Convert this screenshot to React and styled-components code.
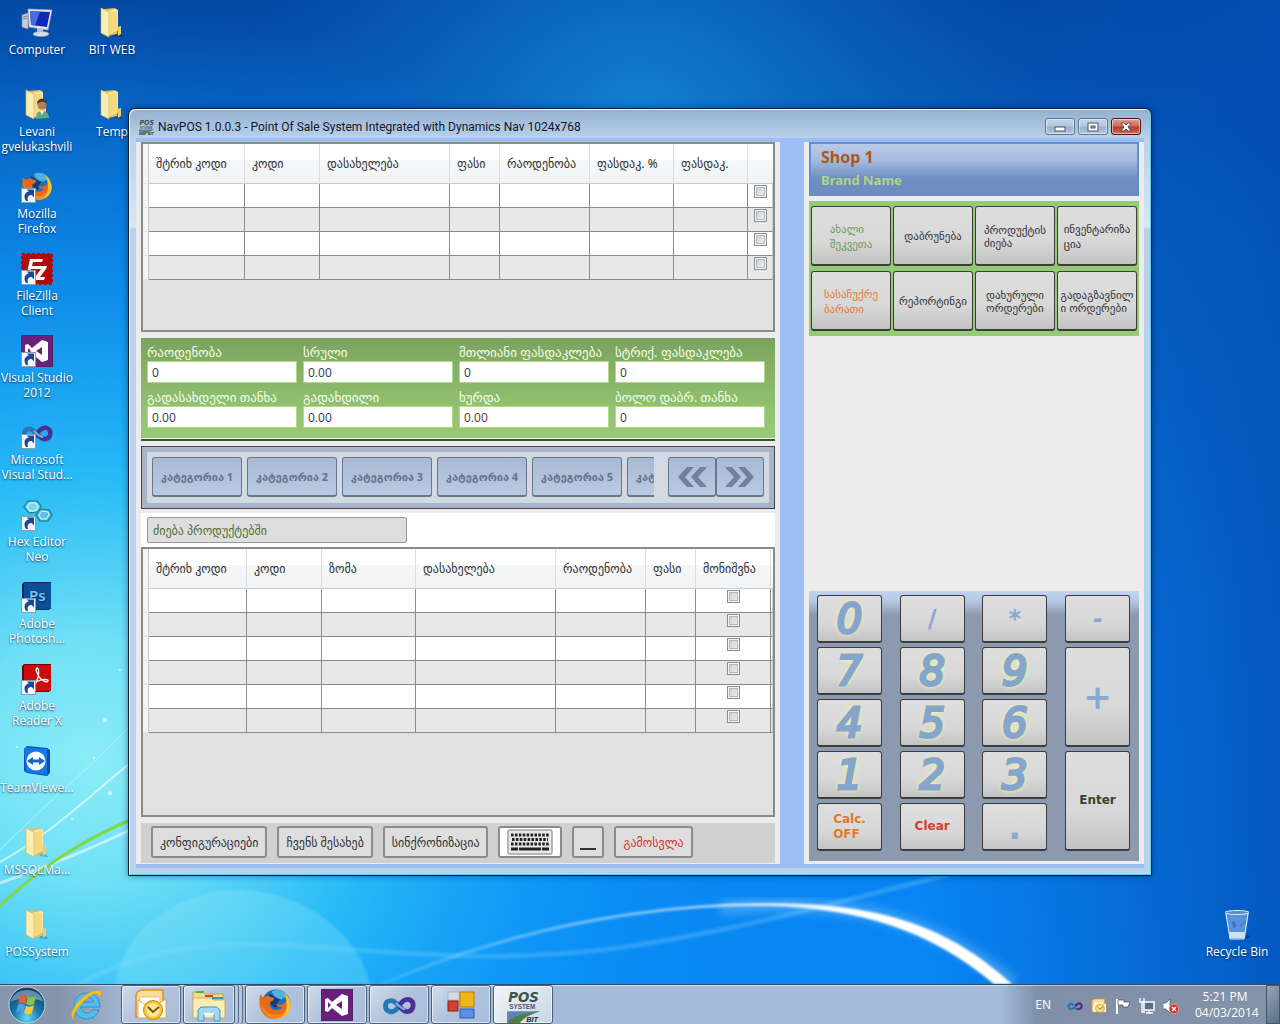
import React from 'react';
import styled, { createGlobalStyle, css } from 'styled-components';

const GlobalStyle = createGlobalStyle`
  * {
    box-sizing: border-box;
  }

  body {
    margin: 0;
    overflow: hidden;
    font-family: 'Noto Sans', 'DejaVu Sans', sans-serif;
    font-size: 12px;
    color: #333;
  }

  button,
  input {
    font-family: inherit;
    margin: 0;
  }
`;

/* ---------- icons ---------- */

const Shortcut = () => (
  <g>
    <rect x="0.5" y="17.5" width="14" height="14" fill="#f4f7fb" stroke="#8e9aa8" />
    <path d="M5 30c-3-5-1-9 3-9.500L5.500 18.500H13v8l-2.200-2.500C7 24 6 26 7 30z" fill="#1c4796" />
  </g>
);

const FolderIcon = ({ user }) => (
  <svg width="32" height="32" viewBox="0 0 32 32" aria-hidden="true">
    <path d="M18 29l9 1-4-6z" fill="#000" opacity="0.25" />
    <path d="M8 2l11-1 2 2v24l-9 2z" fill="#e3bf5c" />
    <path d="M11 4l9-2 2 1v20l-9 5z" fill="#f8e7a0" />
    <path d="M14 5l7-1v18l-7 5z" fill="#f4d97f" />
    <path d="M5 1l8 4v25l-8-4z" fill="#fbeeb5" stroke="#d6b251" strokeWidth="0.7" />
    <path d="M21 20l4-1v8l-3 2z" fill="#efcf6d" />
    {user && (
      <g>
        <path d="M15 30c0-6 2-8 6-8s7 2 7 7z" fill="#5fa58a" />
        <circle cx="21" cy="16" r="4.500" fill="#b97f5a" />
        <path d="M16 15c0-7 10-7 10 0-3-3-6-3-10 0z" fill="#4d3a2e" />
        <path d="M19 22l2 4 2-4z" fill="#e8f2f0" />
      </g>
    )}
  </svg>
);

const ComputerIcon = () => (
  <svg width="32" height="32" viewBox="0 0 32 32" aria-hidden="true">
    <path d="M1 8l6-2v16l-6-2z" fill="#c9ced3" stroke="#858e98" strokeWidth="0.6" />
    <path d="M2 10l4-1M2 12l4-1" stroke="#7b858f" />
    <path d="M7 2l24 1-4 20-19-3z" fill="#e5e9ed" stroke="#9ba5af" strokeWidth="0.7" />
    <path d="M9 4l20 1-3 15-16-2z" fill="#1327b6" />
    <path d="M9 4l10 .5-5 14.200-4-.7z" fill="#4a6ce0" />
    <path d="M16 21l6 1v4h-6z" fill="#bcc4cb" />
    <ellipse cx="20" cy="27" rx="8" ry="2.500" fill="#d9dee2" stroke="#98a2ab" strokeWidth="0.6" />
  </svg>
);

const FirefoxMark = () => (
  <g>
    <circle cx="17" cy="15" r="13.500" fill="#1e6fb8" />
    <path d="M13 3c6-3 14 0 16 7-3-2-5-1-7 1-3-2-7-1-9-8z" fill="#4fb3e0" />
    <path d="M10 5c4 2 7 5 11 6-3 2-4 4-3 7-4 2-8-3-8-13z" fill="#123b80" />
    <path d="M2 6l3 3c2-2 6-2 8 0 2 0 3 1 1 3-3 1-4 3-2 6 3 4 8 3 11 0-3 0-5-1-6-3 5 2 9 0 10-5 4 9-1 18-11 19C6 30-1 20 2 6z" fill="#e66a1a" />
    <path d="M24 4c7 5 9 14 4 20-3 4-8 5-11 5 6-2 10-6 10-13 0-5-1-9-3-12z" fill="#fbc02a" />
    <path d="M3 11c0 8 6 15 15 14 4 0 7-3 9-7-1 8-7 12-12 11C7 28 2 20 3 11z" fill="#f18a1e" />
  </g>
);

const FirefoxIcon = ({ size = 32, shortcut }) => (
  <svg width={size} height={size} viewBox="0 0 32 32" aria-hidden="true">
    <FirefoxMark />
    {shortcut && <Shortcut />}
  </svg>
);

const FileZillaIcon = () => (
  <svg width="32" height="32" viewBox="0 0 32 32" aria-hidden="true">
    <rect x="1" y="1" width="30" height="30" fill="#b30a0a" stroke="#b30a0a" strokeWidth="2" strokeDasharray="3 2" />
    <path d="M9 6h13l-1 3H12l-1 4h8l-1 3h-8l-2 8H5z" fill="#fff" />
    <path d="M15 13h11l-1 3-6 8h5l-1 3H13l1-3 6-8h-6z" fill="#fff" />
    <Shortcut />
  </svg>
);

const VsIcon = ({ shortcut }) => (
  <svg width="32" height="32" viewBox="0 0 32 32" aria-hidden="true">
    <rect width="32" height="32" fill="#68217a" />
    <rect x="0.5" y="0.5" width="31" height="31" fill="none" stroke="#56206b" />
    <path fillRule="evenodd" d="M21 5l6 2v18l-6 2-10-8-4 4-3-1V10l3-1 4 4zM21 12l-6 4 6 4zM7 13v6l3-3z" fill="#fff" />
    {shortcut && <Shortcut />}
  </svg>
);

const InfinityMark = () => (
  <g fill="none" strokeWidth="4.500">
    <path d="M16 17c-3 5-6 6-9 5-5-1-5-9 0-10 4-1 6 2 9 5" stroke="#2876b8" />
    <path d="M16 17c3-5 6-7 10-6 5 2 4 10-1 11-4 1-6-2-9-5" stroke="#4b2f92" />
    <path d="M13 14c3 3 6 6 9 6" stroke="#7fa9dd" strokeWidth="2" />
  </g>
);

const InfinityIcon = ({ size = 32, shortcut }) => (
  <svg width={size} height={size} viewBox="0 0 32 32" aria-hidden="true">
    <InfinityMark />
    {shortcut && <Shortcut />}
  </svg>
);

const HexIcon = () => (
  <svg width="32" height="32" viewBox="0 0 32 32" aria-hidden="true">
    <g strokeWidth="1.500" stroke="#2189a8">
      <path d="M3 8l4-6 9 0 4 5-3 6-9 1z" fill="#7fd6ec" />
      <path d="M15 16l4-6 9 1 3 5-4 6-8 0z" fill="#59c3df" />
    </g>
    <path d="M6 8l3-4 6 0 2 4-3 4-5 0zM18 16l3-4 6 1 1 3-3 4-5 0z" fill="none" stroke="#d8f6fc" />
    <Shortcut />
  </svg>
);

const PhotoshopIcon = () => (
  <svg width="32" height="32" viewBox="0 0 32 32" aria-hidden="true">
    <path d="M1 3l2-2h27v26l-2 2H1z" fill="#0a2c5c" />
    <path d="M3 2h27v26H3z" fill="#0c4f97" />
    <text x="8" y="20" fontFamily="Noto Sans" fontSize="15" fontWeight="600" fill="#74c6f5">Ps</text>
    <Shortcut />
  </svg>
);

const ReaderIcon = () => (
  <svg width="32" height="32" viewBox="0 0 32 32" aria-hidden="true">
    <path d="M1 3l2-2h27v26l-2 2H1z" fill="#6d0606" />
    <path d="M3 2h27v26H3z" fill="#c90d0d" />
    <path d="M16 5c-2 1 0 6 3 10 3 3 7 5 8 3s-6-2-10 0c-3 1-6 4-5 5s4-4 5-9c1-4 1-9-1-9z" fill="none" stroke="#fff" strokeWidth="1.300" />
    <Shortcut />
  </svg>
);

const TeamViewerIcon = () => (
  <svg width="32" height="32" viewBox="0 0 32 32" aria-hidden="true">
    <path d="M3 4l3-3 20 2 3 2v23l-3 3-20-3-3-2z" fill="#0a49b8" />
    <path d="M3 4l2-2 21 2v26L5 27z" fill="#1676e6" />
    <circle cx="15" cy="16" r="9.500" fill="#f5f9fd" />
    <path d="M6 16l6-4v2.500h6V12l6 4-6 4v-2.500h-6V20z" fill="#1565cc" />
  </svg>
);

const RecycleIcon = () => (
  <svg width="32" height="32" viewBox="0 0 32 32" aria-hidden="true">
    <path d="M4 3h24l-4 27H9z" fill="#cfe4f7" opacity="0.4" />
    <path d="M8 23h16l-1 6H9z" fill="#e8ecef" opacity="0.85" />
    <ellipse cx="16" cy="3.500" rx="12" ry="2" fill="#5d88b8" stroke="#e4eef7" />
    <path d="M5 5l4 25h14l4-25" fill="none" stroke="#dfeaf5" />
    <path d="M11 14l2-2 2 5-2 2zM19 17l6-5" fill="#3a66c8" stroke="#4060b8" opacity="0.7" />
    <path d="M24 30l6-2-4-3z" fill="#000" opacity="0.25" />
  </svg>
);

const StartOrb = () => (
  <svg width="38" height="38" viewBox="0 0 38 38" aria-hidden="true">
    <defs>
      <radialGradient id="orb" cx="0.5" cy="0.85" r="0.8">
        <stop offset="0" stopColor="#5fdcf8" />
        <stop offset="0.45" stopColor="#1b7ab0" />
        <stop offset="1" stopColor="#123e66" />
      </radialGradient>
    </defs>
    <circle cx="19" cy="19" r="18" fill="url(#orb)" stroke="#c3d3e2" />
    <path d="M3 16C5 0 33 0 35 16c-8-5-24-5-32 0z" fill="#dcebf5" opacity="0.4" />
    <path d="M12 10c3-2 5-1 7 0l-2 8c-2-1-4-2-7 0z" fill="#e8602c" />
    <path d="M20 11c3 1 5 1 8-1l-2 8c-3 2-5 1-8 0z" fill="#8cc63f" />
    <path d="M10 19c3-2 5-1 7 0l-2 8c-2-1-4-2-7 0z" fill="#4aa3e6" />
    <path d="M18 20c3 1 5 1 8-1l-2 8c-3 2-5 1-8 0z" fill="#fcc92e" />
  </svg>
);

const IeIcon = () => (
  <svg width="34" height="34" viewBox="0 0 34 34" aria-hidden="true">
    <path
      fillRule="evenodd"
      d="M31 19H12c0 4 3 6 6 6 2 0 4-1 5-3h7c-2 6-7 9-12 9C10 31 5 25 5 18S10 5 18 5s13 6 13 14zM12 14h12c0-3-3-5-6-5s-6 2-6 5z"
      fill="#4fbdf0"
      stroke="#1f86c4"
      strokeWidth="0.8"
    />
    <path d="M6 32c-7-1-3-13 6-21 8-8 19-11 20-6 0 2-1 4-2 6 1-4-1-6-5-5C19 8 8 19 5 27c-1 2-1 4 1 5z" fill="#f6c322" stroke="#c79a1a" strokeWidth="0.5" />
  </svg>
);

const OutlookIcon = ({ size = 34 }) => (
  <svg width={size} height={size} viewBox="0 0 34 34" aria-hidden="true">
    <path d="M2 9c0-5 3-7 7-7h20v24l-4 3H2z" fill="#fbdc9a" stroke="#e08f25" strokeWidth="1.500" />
    <path d="M6 9h20v10H6z" fill="#fff" stroke="#e8b660" strokeWidth="0.8" />
    <path d="M4 12l13 8 15-9v19H4z" fill="#fffdf7" stroke="#d89b3a" strokeWidth="0.8" />
    <circle cx="19" cy="22" r="9.500" fill="#fbc531" stroke="#c78412" />
    <circle cx="19" cy="22" r="6.800" fill="#fde79a" />
    <path d="M14 19l5 5 6-5" fill="none" stroke="#7d5312" strokeWidth="2" />
  </svg>
);

const ExplorerIcon = () => (
  <svg width="34" height="34" viewBox="0 0 34 34" aria-hidden="true">
    <path d="M1 4h10l2 2h18v6H1z" fill="#f5dc8c" stroke="#b69136" strokeWidth="0.7" />
    <path d="M4 3h8v2H4z" fill="#3eb53b" />
    <path d="M13 7h8v2h-8z" fill="#d64232" />
    <path d="M20 9h11v2H20z" fill="#3b8fd2" />
    <path d="M1 10h18l2 2h12v18H1z" fill="#fbedb4" stroke="#c29c40" strokeWidth="0.7" />
    <path d="M6 33V22l3-3h16l3 3v11h-6v-7h-10v7z" fill="#9fd8f0" stroke="#3b9cc6" />
    <path d="M12 26h10" stroke="#fff" strokeWidth="2" />
  </svg>
);

const BlocksIcon = () => (
  <svg width="32" height="32" viewBox="0 0 32 32" aria-hidden="true">
    <rect x="3" y="3" width="11" height="8" fill="#d5dbe3" stroke="#aab4c2" />
    <rect x="15" y="3" width="14" height="15" fill="#f2b518" stroke="#b37c0a" />
    <rect x="3" y="12" width="10" height="10" fill="#d7402d" stroke="#8f1e12" />
    <rect x="15" y="20" width="14" height="9" fill="#5d8fe6" stroke="#2f5cb0" />
  </svg>
);

const PosLogo = ({ size = 34 }) => (
  <svg width={size} height={size} viewBox="0 0 34 34" aria-hidden="true">
    <text x="3" y="14" fontFamily="DejaVu Sans Condensed, DejaVu Sans" fontSize="14" fontWeight="700" fontStyle="italic" fill="#3d5347">POS</text>
    <text x="4" y="21" fontFamily="Liberation Sans" fontSize="6" fontWeight="700" fill="#4a5568">SYSTEM</text>
    <path d="M2 23h31L2 34z" fill="#5d83b8" />
    <path d="M2 34c5-6 14-9 31-11-12 4-16 7-19 11z" fill="#4c8040" />
    <text x="20" y="33" fontFamily="Liberation Sans" fontSize="7" fontWeight="700" fontStyle="italic" fill="#222c38">BIT</text>
  </svg>
);

const KeyboardIcon = () => (
  <svg width="46" height="26" viewBox="0 0 46 26" aria-hidden="true">
    <rect x="1" y="1" width="44" height="24" rx="2" fill="#e9e9e9" stroke="#a3a3a3" strokeWidth="1.500" />
    <g stroke="#222" strokeWidth="3">
      <path d="M4 6h38" strokeDasharray="2.600 1.300" />
      <path d="M5 10.500h36" strokeDasharray="2.600 1.300" />
      <path d="M4 15h38" strokeDasharray="2.600 1.300" />
      <path d="M4 20h7M12 20h22M35 20h7" />
    </g>
  </svg>
);

const Chevrons = ({ right }) => (
  <svg width="32" height="24" viewBox="0 0 32 24" aria-hidden="true">
    <path
      d={right
        ? 'M1 2h7l9 10-9 10H1l9-10zM14 2h7l9 10-9 10h-7l9-10z'
        : 'M31 2h-7l-9 10 9 10h7l-9-10zM18 2h-7L2 12l9 10h7L9 12z'}
      fill="#71819c"
    />
  </svg>
);

const FlagIcon = () => (
  <svg width="16" height="16" viewBox="0 0 16 16" aria-hidden="true">
    <path d="M2 1v15" stroke="#fff" strokeWidth="2" />
    <path d="M3 2h6v2h6l-2 5H8V7H3z" fill="#fff" stroke="#333" strokeWidth="0.6" />
  </svg>
);

const NetworkIcon = () => (
  <svg width="16" height="16" viewBox="0 0 16 16" aria-hidden="true">
    <path d="M5 4h10v8H5z" fill="#5b6f88" stroke="#fff" strokeWidth="1.500" />
    <path d="M7 15h7M10 12v3" stroke="#fff" strokeWidth="1.500" />
    <path d="M1 0v4h4V0M3 4v10h3" fill="none" stroke="#fff" strokeWidth="1.300" />
  </svg>
);

const SpeakerIcon = () => (
  <svg width="16" height="16" viewBox="0 0 16 16" aria-hidden="true">
    <path d="M0 5h3l4-4v14l-4-4H0z" fill="#fff" stroke="#444" strokeWidth="0.6" />
    <circle cx="11" cy="11" r="4.800" fill="#d92c20" stroke="#f7cfca" strokeWidth="0.6" />
    <path d="M9 9l4 4M13 9l-4 4" stroke="#fff" strokeWidth="1.600" />
  </svg>
);

const Wallpaper = () => (
  <WallpaperSvg viewBox="0 0 1280 1024" preserveAspectRatio="none" aria-hidden="true">
    <defs>
      <linearGradient id="sky" x1="0" y1="0" x2="0" y2="1">
        <stop offset="0" stopColor="#0448a4" />
        <stop offset="0.25" stopColor="#0667c8" />
        <stop offset="0.6" stopColor="#0a80ea" />
        <stop offset="1" stopColor="#0787f6" />
      </linearGradient>
      <radialGradient id="glow" gradientUnits="userSpaceOnUse" cx="90" cy="760" r="760">
        <stop offset="0" stopColor="#8becf7" />
        <stop offset="0.16" stopColor="#70e0f6" />
        <stop offset="0.38" stopColor="#28bdf7" stopOpacity="0.95" />
        <stop offset="0.65" stopColor="#109cf8" stopOpacity="0.6" />
        <stop offset="1" stopColor="#0b84ea" stopOpacity="0" />
      </radialGradient>
      <radialGradient id="top" gradientUnits="userSpaceOnUse" cx="640" cy="120" r="400">
        <stop offset="0" stopColor="#1590dd" stopOpacity="0.75" />
        <stop offset="1" stopColor="#0a6cc8" stopOpacity="0" />
      </radialGradient>
      <linearGradient id="edge" x1="0" y1="0" x2="1" y2="0">
        <stop offset="0.72" stopColor="#0350b8" stopOpacity="0" />
        <stop offset="1" stopColor="#034db4" stopOpacity="0.8" />
      </linearGradient>
      <linearGradient id="arc" x1="0" y1="0" x2="1" y2="0">
        <stop offset="0" stopColor="#fff" stopOpacity="0.15" />
        <stop offset="0.5" stopColor="#fff" stopOpacity="0.55" />
        <stop offset="0.75" stopColor="#fff" />
      </linearGradient>
      <filter id="soft"><feGaussianBlur stdDeviation="1" /></filter>
      <filter id="haze"><feGaussianBlur stdDeviation="5" /></filter>
    </defs>
    <rect width="1280" height="1024" fill="url(#sky)" />
    <rect width="1280" height="1024" fill="url(#top)" />
    <rect width="1280" height="1024" fill="url(#glow)" />
    <rect width="1280" height="1024" fill="url(#edge)" />
    <path d="M115 984c10-60 70-95 125-94s115 35 130 94z" fill="#9ff0f8" opacity="0.25" filter="url(#soft)" />
    <path d="M80 984c60-35 130-42 200-39 100 5 200 20 330 4 120-16 220-45 340-75" fill="none" stroke="#8fdcff" strokeWidth="5" opacity="0.25" filter="url(#soft)" />
    <path d="M720 908C860 895 940 925 1013 984" fill="none" stroke="#bfe6ff" strokeWidth="14" opacity="0.3" filter="url(#haze)" />
    <path d="M380 984C500 930 640 903 765 903c110 0 180 20 247 81h-18C930 930 860 908 765 906 640 906 510 932 384 984z" fill="url(#arc)" filter="url(#soft)" />
    <path d="M0 862C50 835 90 795 140 755" fill="none" stroke="#fff" strokeWidth="2" opacity="0.6" />
    <path d="M0 883C60 862 100 845 140 825" fill="none" stroke="#fff" strokeWidth="3" opacity="0.55" />
    <path d="M0 850C60 790 100 760 140 715" fill="none" stroke="#fff" opacity="0.4" />
    <path d="M0 906C40 868 80 840 140 816" fill="none" stroke="#7fd84c" strokeWidth="3" />
    <g fill="#fff" opacity="0.7">
      <circle cx="105" cy="720" r="2" />
      <circle cx="94" cy="758" r="1" />
      <circle cx="110" cy="793" r="2" />
      <circle cx="72" cy="819" r="1" />
      <circle cx="17" cy="747" r="1" />
      <circle cx="120" cy="670" r="1" />
    </g>
  </WallpaperSvg>
);

/* ---------- data ---------- */

const desktopItems = [
  { label: 'Computer', icon: <ComputerIcon /> },
  { label: 'Levani gvelukashvili', icon: <FolderIcon user /> },
  { label: 'Mozilla Firefox', icon: <FirefoxIcon shortcut /> },
  { label: 'FileZilla Client', icon: <FileZillaIcon /> },
  { label: 'Visual Studio 2012', icon: <VsIcon shortcut /> },
  { label: 'Microsoft Visual Stud...', icon: <InfinityIcon shortcut /> },
  { label: 'Hex Editor Neo', icon: <HexIcon /> },
  { label: 'Adobe Photosh...', icon: <PhotoshopIcon /> },
  { label: 'Adobe Reader X', icon: <ReaderIcon /> },
  { label: 'TeamViewe...', icon: <TeamViewerIcon /> },
  { label: 'MSSQLMa...', icon: <FolderIcon /> },
  { label: 'POSSystem', icon: <FolderIcon /> },
  { label: 'BIT WEB', icon: <FolderIcon /> },
  { label: 'Temp', icon: <FolderIcon /> },
];

const orderColumns = [
  { title: 'შტრიხ კოდი', width: 96 },
  { title: 'კოდი', width: 75 },
  { title: 'დასახელება' },
  { title: 'ფასი', width: 50 },
  { title: 'რაოდენობა', width: 90 },
  { title: 'ფასდაკ. %', width: 84 },
  { title: 'ფასდაკ.', width: 74 },
  { title: '', width: 25, check: true },
];

const productColumns = [
  { title: 'შტრიხ კოდი', width: 98 },
  { title: 'კოდი', width: 75 },
  { title: 'ზომა', width: 94 },
  { title: 'დასახელება' },
  { title: 'რაოდენობა', width: 90 },
  { title: 'ფასი', width: 50 },
  { title: 'მონიშვნა', width: 75, check: true },
  { title: '', width: 2 },
];

const totals = [
  { label: 'რაოდენობა', value: '0' },
  { label: 'სრული', value: '0.00' },
  { label: 'მთლიანი ფასდაკლება', value: '0' },
  { label: 'სტრიქ. ფასდაკლება', value: '0' },
  { label: 'გადასახდელი თანხა', value: '0.00' },
  { label: 'გადახდილი', value: '0.00' },
  { label: 'ხურდა', value: '0.00', color: '#6b2f2f' },
  { label: 'ბოლო დაბრ. თანხა', value: '0' },
];

const actions = [
  { lines: ['ახალი', 'შეკვეთა'], color: '#6f9a55', tall: true },
  { lines: ['დაბრუნება'] },
  { lines: ['პროდუქტის', 'ძიება'] },
  { lines: ['ინვენტარიზა', 'ცია'], tall: true },
  { lines: ['სასაჩუქრე', 'ბარათი'], color: '#e07a30', tall: true },
  { lines: ['რეპორტინგი'] },
  { lines: ['დახურული', 'ორდერები'] },
  { lines: ['გადაგზავნილ', 'ი ორდერები'] },
];

const keys = [
  { text: '0', kind: 'digit' },
  { text: '/', kind: 'sign' },
  { text: '*', kind: 'sign' },
  { text: '-', kind: 'sign' },
  { text: '7', kind: 'digit' },
  { text: '8', kind: 'digit' },
  { text: '9', kind: 'digit' },
  { text: '+', kind: 'big', rows: 2 },
  { text: '4', kind: 'digit' },
  { text: '5', kind: 'digit' },
  { text: '6', kind: 'digit' },
  { text: '1', kind: 'digit' },
  { text: '2', kind: 'digit' },
  { text: '3', kind: 'digit' },
  { text: 'Enter', color: '#36452c', rows: 2 },
  { text: 'Calc. OFF', color: '#dc7a2c' },
  { text: 'Clear', color: '#d0402f' },
  { text: '.', kind: 'big' },
];

/* ---------- components ---------- */

const Grid = ({ columns, rows, label }) => (
  <Table aria-label={label}>
    <colgroup>
      <col style={{ width: 6 }} />
      {columns.map((c, i) => (
        <col key={i} style={{ width: c.width }} />
      ))}
    </colgroup>
    <thead>
      <tr>
        <RowHead as="th" />
        {columns.map((c, i) => (
          <HeadCell key={i}>{c.title}</HeadCell>
        ))}
      </tr>
    </thead>
    <tbody>
      {Array.from({ length: rows }, (_, r) => (
        <Row key={r}>
          <RowHead />
          {columns.map((c, i) => (
            <Cell key={i}>
              {c.check && <Check type="checkbox" aria-label={`row ${r + 1}`} />}
            </Cell>
          ))}
        </Row>
      ))}
    </tbody>
  </Table>
);

const App = () => (
  <Screen>
    <GlobalStyle />
    <Wallpaper />
    <Desktop>
      <IconGrid>
        {desktopItems.map((item) => (
          <DesktopIcon key={item.label}>
            {item.icon}
            <span>{item.label}</span>
          </DesktopIcon>
        ))}
      </IconGrid>
      <DesktopIcon>
        <RecycleIcon />
        <span>Recycle Bin</span>
      </DesktopIcon>

      <Window>
        <TitleBar>
          <PosLogo size={17} />
          <Title>NavPOS 1.0.0.3 - Point Of Sale System Integrated with Dynamics Nav 1024x768</Title>
          <WindowButton aria-label="Minimize">
            <svg width="12" height="12" viewBox="0 0 12 12"><rect x="1" y="6" width="10" height="4" fill="#fff" stroke="#4b5563" /></svg>
          </WindowButton>
          <WindowButton aria-label="Maximize">
            <svg width="12" height="12" viewBox="0 0 12 12">
              <rect x="1" y="2" width="10" height="8" fill="#fff" stroke="#4b5563" />
              <rect x="4" y="5" width="4" height="2" fill="#9db4cc" stroke="#4b5563" />
            </svg>
          </WindowButton>
          <WindowButton $close aria-label="Close">
            <svg width="12" height="12" viewBox="0 0 12 12">
              <path d="M1 2h3l2 2 2-2h3L8 6l3 4H8L6 8l-2 2H1l3-4z" fill="#fff" stroke="#4b3a44" strokeWidth="0.8" />
            </svg>
          </WindowButton>
        </TitleBar>

        <Body>
          <LeftPane>
            <GridBox>
              <Grid columns={orderColumns} rows={4} label="Order" />
            </GridBox>

            <Totals>
              {totals.map((t, i) => (
                <Field key={i} $color={t.color}>
                  {t.label}
                  <input defaultValue={t.value} />
                </Field>
              ))}
            </Totals>

            <Categories>
              <CategoryInner>
                <CategoryList>
                  {[1, 2, 3, 4, 5, 6].map((n) => (
                    <Category key={n}>კატეგორია {n}</Category>
                  ))}
                </CategoryList>
                <Pager>
                  <PageButton aria-label="Previous"><Chevrons /></PageButton>
                  <PageButton aria-label="Next"><Chevrons right /></PageButton>
                </Pager>
              </CategoryInner>
            </Categories>

            <SearchBar>
              <Search aria-label="Search" defaultValue="ძიება პროდუქტებში" />
            </SearchBar>
            <GridBox $grow>
              <Grid columns={productColumns} rows={6} label="Products" />
            </GridBox>

            <Footer>
              <FooterButton>კონფიგურაციები</FooterButton>
              <FooterButton>ჩვენს შესახებ</FooterButton>
              <FooterButton>სინქრონიზაცია</FooterButton>
              <FooterButton $white aria-label="Keyboard"><KeyboardIcon /></FooterButton>
              <FooterButton $dash aria-label="Minimize"><Dash /></FooterButton>
              <FooterButton $red>გამოსვლა</FooterButton>
            </Footer>
          </LeftPane>

          <RightPane>
            <ShopHeader>
              <ShopName>Shop 1</ShopName>
              <BrandName>Brand Name</BrandName>
            </ShopHeader>
            <Actions>
              {actions.map((a) => (
                <ActionButton key={a.lines[0]} $color={a.color} $tall={a.tall}>
                  <span>
                    {a.lines.map((l) => (
                      <div key={l}>{l}</div>
                    ))}
                  </span>
                </ActionButton>
              ))}
            </Actions>
            <Keypad>
              {keys.map((k) => (
                <Key key={k.text} $kind={k.kind} $rows={k.rows} $color={k.color}>
                  <span>{k.text}</span>
                </Key>
              ))}
            </Keypad>
          </RightPane>
        </Body>
      </Window>
    </Desktop>

    <Taskbar>
      <PlainButton aria-label="Start"><StartOrb /></PlainButton>
      <PlainButton aria-label="Internet Explorer"><IeIcon /></PlainButton>
      <TaskList>
        <Task aria-label="Outlook"><OutlookIcon /></Task>
        <Task $stack aria-label="Explorer"><ExplorerIcon /></Task>
        <Task aria-label="Firefox"><FirefoxIcon size={34} /></Task>
        <Task aria-label="Visual Studio"><VsIcon /></Task>
        <Task aria-label="Visual Studio 2010"><InfinityIcon size={34} /></Task>
        <Task aria-label="Blocks"><BlocksIcon /></Task>
        <Task $active aria-label="NavPOS"><PosLogo size={36} /></Task>
      </TaskList>
      <Tray>
        <span>EN</span>
        <TrayIcons>
          <InfinityIcon size={16} />
          <OutlookIcon size={16} />
          <FlagIcon />
          <NetworkIcon />
          <SpeakerIcon />
        </TrayIcons>
        <Clock>
          <div>5:21 PM</div>
          <div>04/03/2014</div>
        </Clock>
        <ShowDesktop aria-label="Show desktop" />
      </Tray>
    </Taskbar>
  </Screen>
);

/* ---------- styles ---------- */

const Screen = styled.div`
  position: relative;
  display: flex;
  flex-direction: column;
  height: 100vh;
  overflow: hidden;
`;

const WallpaperSvg = styled.svg`
  position: absolute;
  inset: 0;
  width: 100%;
  height: 100%;
`;

const Desktop = styled.main`
  position: relative;
  flex: 1;
  display: flex;
  justify-content: space-between;
  align-items: flex-end;
  padding-right: 6px;
`;

const IconGrid = styled.div`
  align-self: stretch;
  display: grid;
  grid-auto-flow: column;
  grid-template-rows: repeat(12, 82px);
  grid-auto-columns: 75px;
`;

const DesktopIcon = styled.div`
  display: flex;
  flex-direction: column;
  align-items: center;
  width: 74px;
  height: 82px;
  padding-top: 7px;
  color: #fff;
  font-family: 'Open Sans', 'Noto Sans', sans-serif;
  font-size: 12px;
  line-height: 15px;
  text-align: center;
  text-shadow: 0 1px 2px rgba(0, 20, 60, 0.8);

  svg {
    flex-shrink: 0;
  }

  span {
    margin-top: 3px;
  }
`;

const Window = styled.section`
  position: absolute;
  top: 108px;
  left: 10%;
  right: 10%;
  bottom: 108px;
  display: flex;
  flex-direction: column;
  padding: 0 7px 7px;
  border: 1px solid #10202e;
  border-radius: 7px 7px 0 0;
  background: linear-gradient(#93b0cf, #b9d1ea 29px, #d8e6f6 118px, #b9d1ea 120px);
  box-shadow: inset 1px 1px 0 #e9f3fb, inset -1px -1px 0 #5fd0ea, 0 0 6px rgba(0, 20, 60, 0.5);
`;

const TitleBar = styled.header`
  display: flex;
  align-items: center;
  height: 29px;
  padding: 6px 3px 0 2px;
  gap: 3px;
`;

const Title = styled.span`
  flex: 1;
  color: #14142a;
  font-family: Roboto, 'Open Sans', sans-serif;
  font-size: 12px;
  white-space: nowrap;
`;

const WindowButton = styled.button`
  display: flex;
  align-items: center;
  justify-content: center;
  width: 30px;
  height: 17px;
  padding: 0;
  border: 1px solid ${(p) => (p.$close ? '#4a1420' : '#5d7592')};
  border-radius: 3px;
  box-shadow: inset 0 0 0 1px rgba(255, 255, 255, 0.5);
  background: ${(p) => (p.$close
    ? 'linear-gradient(#dba39a, #cd6a58 48%, #b93a26 52%, #cf6a50)'
    : 'linear-gradient(#c3d5e8, #b3c8de 48%, #98b2ce 52%, #b0c8e0)')};
`;

const Body = styled.div`
  flex: 1;
  display: flex;
  gap: 24px;
  padding: 4px 0;
  min-height: 0;
  background: #9dbdf5;
`;

const LeftPane = styled.div`
  flex: 1;
  min-width: 0;
  display: flex;
  flex-direction: column;
  padding: 0 5px 1px;
  background: #ececec;
`;

const GridBox = styled.div`
  border: 2px solid #8a8a8a;
  background: #e1e1e1;
  ${(p) => (p.$grow ? 'flex: 1;' : 'padding-bottom: 50px;')}
`;

const Table = styled.table`
  width: 100%;
  table-layout: fixed;
  border-collapse: separate;
  border-spacing: 0;
`;

const HeadCell = styled.th`
  height: 40px;
  padding: 0 0 0 7px;
  border-right: 1px solid #dcdfe2;
  border-bottom: 1px solid #c9cccf;
  background: linear-gradient(#fff 40%, #f5f7f8 42%, #f0f2f4);
  color: #333;
  font-size: 12px;
  font-weight: 400;
  text-align: left;
  white-space: nowrap;

  &:last-child {
    border-right: 0;
    padding: 0;
  }
`;

const Cell = styled.td`
  height: 24px;
  padding: 1px 0 0;
  border-right: 1px solid #8a8a8a;
  border-bottom: 1px solid #8a8a8a;
  text-align: center;
  vertical-align: top;
  line-height: 0;

  &:last-child {
    border-right-color: #ccc;
  }
`;

const RowHead = styled.td`
  padding: 0;
  border-right: 1px solid #c8c8c8;
  border-bottom: 1px solid #e4e4e4;
  background: #f6f6f6;
`;

const Row = styled.tr`
  background: #fff;

  &:nth-child(even) {
    background: #e8e8e8;
  }
`;

const Check = styled.input`
  appearance: none;
  width: 13px;
  height: 13px;
  border: 1px solid #8c8f92;
  background: linear-gradient(135deg, #c5cad0, #f4f5f6);
  box-shadow: inset 0 0 0 1px #f4f4f4, inset 0 0 0 2px #b4b9bf;
`;

const Totals = styled.div`
  display: grid;
  grid-template-columns: repeat(4, 1fr);
  gap: 5px 6px;
  margin-top: 6px;
  padding: 5px 10px 11px 6px;
  border-bottom: 2px solid #3d5230;
  background: linear-gradient(#7ca35f, #90c26f 70px, #98ca78 100px, #f4f9ef 100px);
`;

const Field = styled.label`
  display: flex;
  flex-direction: column;
  color: #f4fbe9;
  font-size: 13px;
  line-height: 18px;
  white-space: nowrap;

  input {
    width: 100%;
    height: 22px;
    padding: 0 4px;
    border: 1px solid #b5d985;
    background: #fff;
    color: ${(p) => p.$color || '#2d3a55'};
    font-family: 'Open Sans', sans-serif;
    font-size: 12px;
  }
`;

const Categories = styled.div`
  margin-top: 5px;
  padding: 5px;
  border: 1px solid #3f4550;
  background: #a9b4c6;
`;

const CategoryInner = styled.div`
  display: flex;
  justify-content: space-between;
  padding: 5px 5px 6px;
  background: #d3d9e2;
`;

const CategoryList = styled.div`
  flex: 1;
  display: flex;
  gap: 5px;
  margin-right: 14px;
  overflow: hidden;
`;

const blueButton = css`
  height: 40px;
  padding: 0;
  border: 1px solid #69758a;
  border-bottom-width: 2px;
  border-radius: 3px;
  background: linear-gradient(#aab9d2, #b9cae4);
  color: #66748d;
`;

const Category = styled.button`
  ${blueButton}
  flex: 0 0 90px;
  font-size: 11px;
  font-weight: 700;
  white-space: nowrap;
`;

const Pager = styled.div`
  display: flex;
`;

const PageButton = styled.button`
  ${blueButton}
  display: flex;
  align-items: center;
  justify-content: center;
  width: 48px;
`;

const SearchBar = styled.div`
  margin-top: 4px;
  padding: 4px 6px;
  background: #fff;
`;

const Search = styled.input`
  display: block;
  width: 260px;
  height: 26px;
  padding: 0 5px;
  border: 1px solid #979797;
  border-radius: 2px;
  background: #dedede;
  color: #4e6e38;
  font-size: 12px;
`;

const Footer = styled.div`
  display: flex;
  gap: 10px;
  margin-top: 6px;
  padding: 3px 10px 5px;
  background: #d0d0d0;
`;

const FooterButton = styled.button`
  display: flex;
  align-items: center;
  justify-content: center;
  height: 32px;
  padding: 0 ${(p) => (p.$dash ? 6 : 7)}px;
  border: 2px solid #8b8b8b;
  border-radius: 3px;
  background: ${(p) => (p.$white ? '#fff' : '#dedede')};
  color: ${(p) => (p.$red ? '#d5352b' : '#333')};
  font-size: 12px;
  white-space: nowrap;
`;

const Dash = styled.span`
  width: 16px;
  height: 2px;
  margin-top: 14px;
  background: #333;
`;

const RightPane = styled.aside`
  flex: 0 0 340px;
  display: flex;
  flex-direction: column;
  padding: 0 5px 3px;
  background: #ececec;
`;

const ShopHeader = styled.div`
  height: 54px;
  padding: 2px 10px 0;
  border: 2px solid #5f8fd2;
  border-bottom: 0;
  background: linear-gradient(#b9cae8, #a9bce0 30%, #6f8fc2 65%, #6c8dc0);
`;

const ShopName = styled.div`
  color: #a9571c;
  font-size: 16px;
  font-weight: 700;
  line-height: 22px;
`;

const BrandName = styled.div`
  color: #b3d487;
  font-size: 13px;
  font-weight: 700;
  line-height: 24px;
`;

const Actions = styled.div`
  display: grid;
  grid-template-columns: repeat(4, 1fr);
  gap: 5px 2px;
  margin-top: 5px;
  padding: 5px 2px;
  background: #95cb74;
`;

const greyButton = css`
  display: flex;
  align-items: center;
  justify-content: center;
  padding: 0;
  border: 1px solid #3c3c3c;
  border-bottom-width: 2px;
  border-radius: 3px;
  background: linear-gradient(#dedede, #d8d8d8 60%, #c3c3c3);
`;

const ActionButton = styled.button`
  ${greyButton}
  height: 60px;
  color: ${(p) => p.$color || '#333'};
  font-size: 11px;
  line-height: ${(p) => (p.$tall ? 15 : 13)}px;
  text-align: left;
  white-space: nowrap;
`;

const Keypad = styled.div`
  display: grid;
  grid-template-columns: repeat(4, 65px);
  grid-auto-rows: 48px;
  justify-content: space-between;
  row-gap: 4px;
  margin-top: auto;
  padding: 4px 9px 10px 8px;
  background: linear-gradient(#c0d3f0, #b6c8e4 10px, #8c9ab0 24px);
`;

const keyKinds = {
  digit: css`
    color: #86a5cd;
    font-family: 'DejaVu Sans', sans-serif;
    font-size: 40px;
    font-style: italic;
    line-height: 46px;
    -webkit-text-stroke: 3px #86a5cd;
    text-shadow: 0 0 3px #eef2a8, 0 0 4px #eef2a8, 0 0 5px #eef2a8, 0 0 6px #eef2a8;
  `,
  sign: css`
    color: #8aa8d0;
    font-size: 24px;
    line-height: 28px;
  `,
  big: css`
    color: #8aa8d0;
    font-size: 34px;
    line-height: 40px;
  `,
};

const Key = styled.button`
  ${greyButton}
  grid-row: span ${(p) => p.$rows || 1};
  color: ${(p) => p.$color};
  font-family: 'DejaVu Sans', sans-serif;
  font-size: 12px;
  font-weight: ${(p) => (p.$kind === 'digit' ? 400 : 700)};
  line-height: 15px;
  text-align: left;
  ${(p) => keyKinds[p.$kind]}

  span {
    width: min-content;
  }
`;

const Taskbar = styled.footer`
  position: relative;
  display: flex;
  height: 40px;
  border-top: 1px solid #2c4c6c;
  background: linear-gradient(90deg, #8796ab, #8594aa 60px, #a3b9d8 130px, #a5bcdc 78%, #7f90a8 81%, #8292a9);
  box-shadow: inset 0 1px 0 rgba(255, 255, 255, 0.5);
`;

const PlainButton = styled.button`
  display: flex;
  align-items: center;
  justify-content: center;
  width: 54px;
  padding: 0;
  border: 0;
  background: none;

  & + & {
    width: 67px;
    padding-right: 3px;
  }
`;

const TaskList = styled.nav`
  display: flex;
  gap: 2px;
  flex: 1;
`;

const Task = styled.button`
  display: flex;
  align-items: center;
  justify-content: center;
  width: 60px;
  padding: 0;
  border: 1px solid #4c5f78;
  border-radius: 3px;
  background: ${(p) => (p.$active
    ? 'linear-gradient(135deg, #f3f6fa, #c9d5e6)'
    : 'linear-gradient(135deg, #d0dbea, #b0c2dc 50%, #a9bddb)')};
  box-shadow: inset 0 0 0 1px rgba(255, 255, 255, 0.6);
  ${(p) => p.$stack && css`
    width: 52px;
    margin-right: 8px;
    box-shadow: inset 0 0 0 1px rgba(255, 255, 255, 0.6), 3px 0 0 #b5c6de, 4px 0 0 #5a6d86, 7px 0 0 #b5c6de, 8px 0 0 #5a6d86;
  `}
`;

const Tray = styled.div`
  display: flex;
  align-items: center;
  color: #fff;
  font-family: 'Open Sans', sans-serif;
  font-size: 12px;
  line-height: 16px;
`;

const TrayIcons = styled.div`
  display: flex;
  gap: 8px;
  margin: 2px 16px 0;
`;

const Clock = styled.div`
  width: 60px;
  margin-right: 11px;
  text-align: center;
`;

const ShowDesktop = styled.button`
  align-self: stretch;
  width: 14px;
  padding: 0;
  border: 1px solid #45566c;
  background: linear-gradient(135deg, #93a3b8, #5c6f88);
`;

export default App;
